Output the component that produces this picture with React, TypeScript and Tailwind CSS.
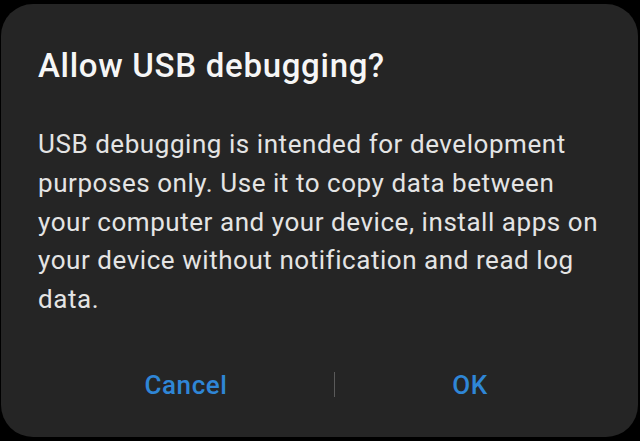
export default function App() {
  return (
    <div
      className="w-[640px] h-[441px] bg-black overflow-hidden pt-[4px] pl-[1px]"
      style={{ fontFamily: 'Roboto, "Noto Sans", sans-serif' }}
    >
      <div className="w-[637px] h-[433px] rounded-[32px] bg-[#252525] flex flex-col">
        <h1 className="pl-[37px] pt-[42px] text-[33px] leading-[40px] font-medium text-[#f6f6f6] tracking-[0.7px]">
          Allow USB debugging?
        </h1>
        <p className="pl-[37px] pr-[33px] mt-[39px] text-[26px] leading-[38.75px] text-[#e4e4e4] tracking-[0.55px]">
          USB debugging is intended for development purposes only. Use it to copy data between your
          computer and your device, install apps on your device without notification and read log
          data.
        </p>
        <div className="flex items-center mt-[46px] pl-[37px] h-[40px]">
          <button className="w-[296px] text-center text-[26px] leading-[40px] font-medium text-[#2f86d6] tracking-[0.6px]">
            Cancel
          </button>
          <div className="w-px h-[25px] bg-[#5a5a5a]" />
          <button className="w-[270px] text-center text-[26px] leading-[40px] font-medium text-[#2f86d6] tracking-[0.6px]">
            OK
          </button>
        </div>
      </div>
    </div>
  );
}
